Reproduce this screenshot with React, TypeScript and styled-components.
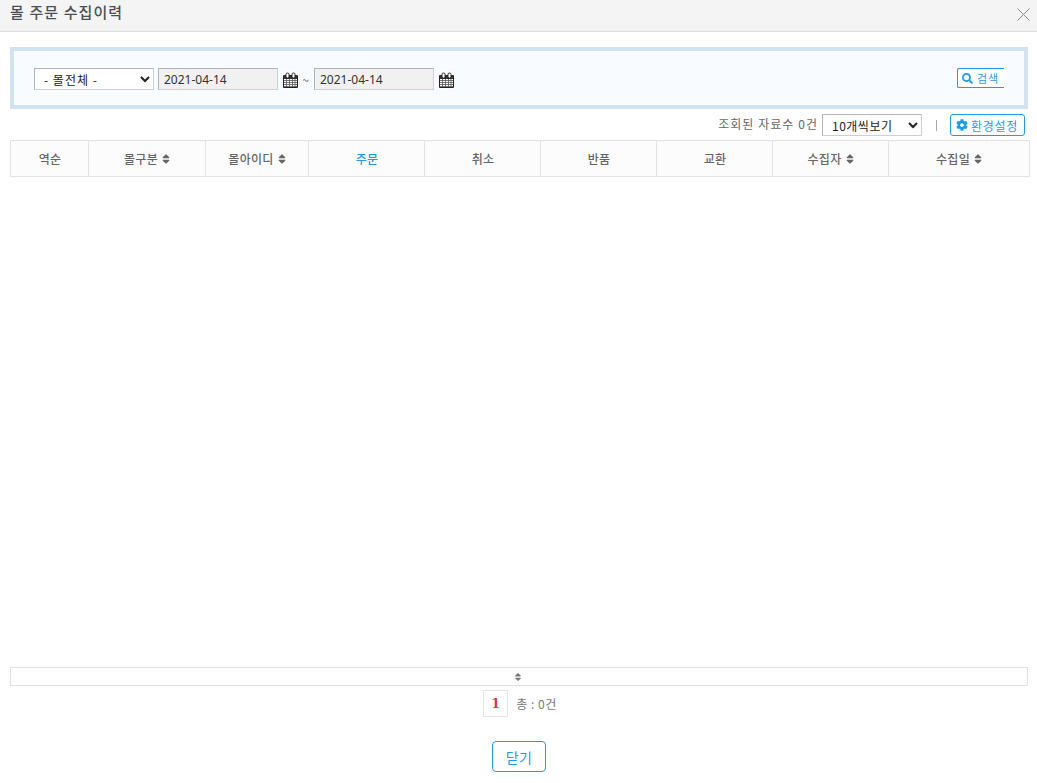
import React from "react";
import styled, { createGlobalStyle } from "styled-components";
import { FaSearch, FaCog, FaSort } from "react-icons/fa";

const Global = createGlobalStyle`
  html, body { margin: 0; padding: 0; background: #fff; }
  body { font-family: "Noto Sans CJK KR", "Noto Sans", sans-serif; overflow: hidden; }
  * { box-sizing: border-box; }
`;

const Page = styled.div`
  width: 1037px;
  height: 783px;
  display: flex;
  flex-direction: column;
`;
const Header = styled.header`
  height: 32px;
  flex: none;
  background: #f4f4f4;
  border-bottom: 1px solid #dedede;
  display: flex;
  align-items: flex-start;
  justify-content: space-between;
  padding: 0 7px 0 10px;
`;
const Title = styled.h1`
  margin: 0;
  font-size: 15px;
  line-height: 24px;
  font-weight: 500;
  color: #4a4f55;
  letter-spacing: 1.1px;
`;
const CloseIcon = styled.svg`
  width: 13px;
  height: 13px;
  margin-top: 8px;
  stroke: #8b8b8b;
  stroke-width: 1;
  fill: none;
`;
const Body = styled.main`
  flex: 1;
  display: flex;
  flex-direction: column;
  padding: 15px 7px 0 10px;
`;
const SearchBox = styled.section`
  width: 1018px;
  height: 62px;
  flex: none;
  background: #f8fbff;
  border: 4px solid #d0e3f3;
  display: flex;
  align-items: flex-start;
  justify-content: space-between;
  padding: 17px 20px 0 20px;
`;
const Filters = styled.div`
  display: flex;
  align-items: center;
  height: 22px;
`;
const Select = styled.select<{ $w: number; $spacing: number }>`
  width: ${(p) => p.$w}px;
  height: 22px;
  padding: 1px 0 0 5px;
  font-family: inherit;
  font-size: 12px;
  letter-spacing: ${(p) => p.$spacing}px;
  color: #222;
  background: #fff;
  border: 1px solid #cfcfcf;
  border-top-color: #b5b5b5;
  border-left-color: #b5b5b5;
  border-radius: 0;
`;
const DateInput = styled.input`
  width: 120px;
  height: 22px;
  margin-left: 4px;
  padding: 1px 5px 0;
  font-family: "Noto Sans", sans-serif;
  font-size: 12px;
  color: #333;
  background: #f1f1f1;
  border: 1px solid #cfcfcf;
  border-top-color: #b5b5b5;
  border-left-color: #b5b5b5;
`;
const CalendarIcon = styled.svg`
  width: 15px;
  height: 18px;
  margin: 2px 0 0 5px;
  background: #fff;
  flex: none;
`;
const Tilde = styled.span`
  width: 15px;
  text-align: center;
  font-size: 12px;
  color: #666;
  margin-right: -3px;
`;
const SearchButton = styled.button`
  width: 47px;
  height: 20px;
  padding: 0 0 0 4px;
  display: flex;
  align-items: center;
  gap: 4px;
  font-family: inherit;
  font-size: 11px;
  letter-spacing: 1px;
  color: #1c9bf0;
  background: #fff;
  border: 1px solid #1c9bf0;
  border-right: 0;
  border-radius: 2px 0 0 2px;
  svg { width: 11px; height: 11px; }
`;
const Toolbar = styled.div`
  height: 22px;
  margin-top: 5px;
  width: 1015px;
  flex: none;
  display: flex;
  align-items: center;
  justify-content: flex-end;
`;
const Count = styled.span`
  font-size: 12px;
  color: #666;
  letter-spacing: 1.05px;
  margin: 0 4px 3px 0;
`;
const Divider = styled.span`
  width: 1px;
  height: 11px;
  background: #aaa;
  margin: 0 13px 0 14px;
`;
const SettingsButton = styled.button`
  width: 75px;
  height: 22px;
  padding: 0 0 0 5px;
  display: flex;
  align-items: center;
  gap: 3px;
  font-family: inherit;
  font-size: 12px;
  letter-spacing: 0.7px;
  color: #1c9bf0;
  background: #fff;
  border: 1px solid #1c9bf0;
  border-radius: 3px;
  white-space: nowrap;
  svg { width: 12px; height: 12px; }
`;
const Table = styled.div`
  width: 1020px;
  height: 37px;
  margin-top: 4px;
  flex: none;
  display: grid;
  grid-template-columns: 77px 117px 103px 116px 116px 116px 116px 116px 141px;
  background: #fcfcfc;
  border: 1px solid #e2e3e8;
`;
const HeadCell = styled.div<{ $active?: boolean }>`
  display: flex;
  align-items: center;
  justify-content: center;
  gap: 3px;
  padding-left: 1px;
  font-size: 12px;
  font-weight: 500;
  letter-spacing: 0.3px;
  color: ${(p) => (p.$active ? "#1c9bf0" : "#666")};
  border-left: 1px solid #e2e3e8;
  &:first-child { border-left: 0; }
  svg { width: 10px; height: 12px; color: #666; }
`;
const Spacer = styled.div`
  flex: 1;
`;
const ScrollStrip = styled.div`
  width: 1018px;
  height: 19px;
  flex: none;
  display: flex;
  align-items: center;
  justify-content: center;
  padding-right: 2px;
  border: 1px solid #e2e2e2;
  svg { width: 8px; height: 10px; color: #777; }
`;
const Pager = styled.div`
  height: 27px;
  margin-top: 4px;
  flex: none;
  width: 1018px;
  display: flex;
  align-items: center;
  justify-content: center;
  gap: 8px;
  padding-left: 2px;
`;
const PageNumber = styled.span`
  width: 25px;
  height: 27px;
  display: flex;
  align-items: center;
  justify-content: center;
  font-family: "DejaVu Serif", serif;
  font-size: 12px;
  font-weight: 700;
  color: #e5332a;
  border: 1px solid #e4e4e4;
`;
const Total = styled.span`
  font-size: 12px;
  letter-spacing: 0.5px;
  color: #777;
`;
const Footer = styled.div`
  width: 1018px;
  flex: none;
  display: flex;
  justify-content: center;
  margin-top: 24px;
  margin-bottom: 11px;
`;
const CloseButton = styled.button`
  width: 54px;
  height: 31px;
  padding: 0;
  font-family: inherit;
  font-size: 14px;
  letter-spacing: 0.4px;
  color: #1c9bf0;
  background: #fff;
  border: 1px solid #1c9bf0;
  border-radius: 4px;
`;

const columns: { label: string; sort?: boolean; active?: boolean }[] = [
  { label: "역순" },
  { label: "몰구분", sort: true },
  { label: "몰아이디", sort: true },
  { label: "주문", active: true },
  { label: "취소" },
  { label: "반품" },
  { label: "교환" },
  { label: "수집자", sort: true },
  { label: "수집일", sort: true },
];

const Calendar = () => (
  <CalendarIcon viewBox="0 0 15 18" fill="none">
    <path d="M0.5 4.5 H14.5 V16.5 H0.5 Z" stroke="#222" />
    <rect x="1" y="4" width="13" height="4" fill="#333" />
    <rect x="3" y="2" width="3" height="5" rx="1.4" fill="#fff" stroke="#222" />
    <rect x="9" y="2" width="3" height="5" rx="1.4" fill="#fff" stroke="#222" />
    <path
      d="M1 9.5 H14 M1 11.5 H14 M1 13.5 H14 M1 15.5 H14 M3.5 8 V16 M6.5 8 V16 M9.5 8 V16 M12 8 V16"
      stroke="#555"
      strokeWidth="0.8"
    />
  </CalendarIcon>
);

export default function App() {
  return (
    <Page>
      <Global />
      <Header>
        <Title>몰 주문 수집이력</Title>
        <CloseIcon viewBox="0 0 13 13">
          <path d="M0.5 0.5 L12.5 12.5 M12.5 0.5 L0.5 12.5" />
        </CloseIcon>
      </Header>
      <Body>
        <SearchBox>
          <Filters>
            <Select $w={120} $spacing={1} defaultValue="all">
              <option value="all">- 몰전체 -</option>
            </Select>
            <DateInput readOnly value="2021-04-14" />
            <Calendar />
            <Tilde>~</Tilde>
            <DateInput readOnly value="2021-04-14" />
            <Calendar />
          </Filters>
          <SearchButton>
            <FaSearch />
            검색
          </SearchButton>
        </SearchBox>
        <Toolbar>
          <Count>조회된 자료수 0건</Count>
          <Select $w={100} $spacing={0.5} defaultValue="10">
            <option value="10">10개씩보기</option>
          </Select>
          <Divider />
          <SettingsButton>
            <FaCog />
            환경설정
          </SettingsButton>
        </Toolbar>
        <Table>
          {columns.map((c) => (
            <HeadCell key={c.label} $active={c.active}>
              {c.label}
              {c.sort && <FaSort />}
            </HeadCell>
          ))}
        </Table>
        <Spacer />
        <ScrollStrip>
          <FaSort />
        </ScrollStrip>
        <Pager>
          <PageNumber>1</PageNumber>
          <Total>총 : 0건</Total>
        </Pager>
        <Footer>
          <CloseButton>닫기</CloseButton>
        </Footer>
      </Body>
    </Page>
  );
}
